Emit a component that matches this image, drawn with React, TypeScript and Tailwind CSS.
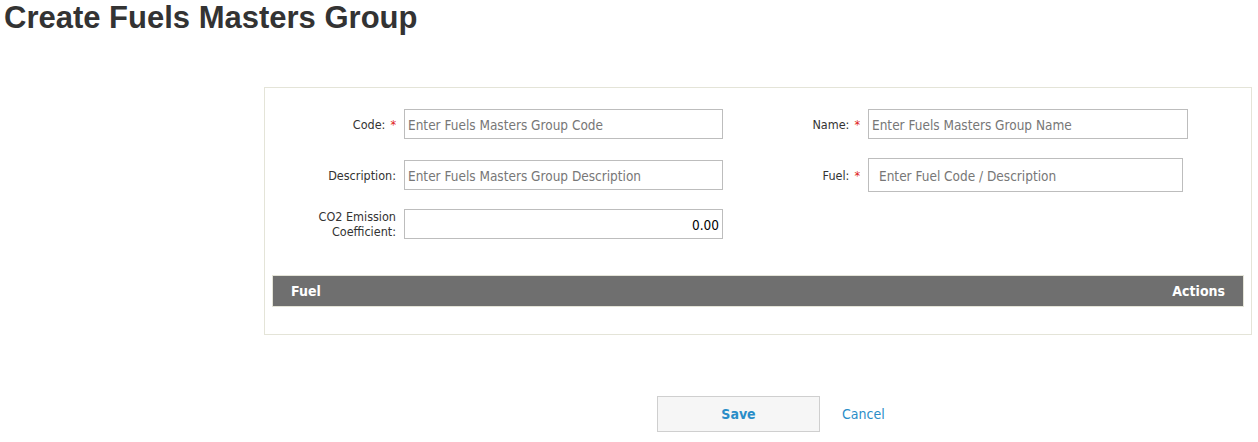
const FONT = "font-['DejaVu_Sans_Condensed','DejaVu_Sans',sans-serif]";

function Label({ text, required, className = "" }: { text: React.ReactNode; required?: boolean; className?: string }) {
  return (
    <div className={`flex items-center justify-end text-right text-[12.5px] leading-[15px] text-[#333] ${className}`}>
      <span>{text}</span>
      {required && <span className="ml-[5px] text-[#e02020]">*</span>}
    </div>
  );
}

function Field({ placeholder, value, className = "" }: { placeholder?: string; value?: string; className?: string }) {
  return (
    <input
      readOnly
      placeholder={placeholder}
      value={value ?? ""}
      className={`h-[30px] border border-[#bdbdbd] bg-white px-[3px] pt-[1px] text-[13.5px] text-black placeholder:text-[#777] outline-none ${className}`}
    />
  );
}

export default function App() {
  return (
    <div className={`bg-white min-h-[442px] ${FONT}`}>
      <h1 className="pl-[4px] pt-[1px] font-['Liberation_Sans',Arial,sans-serif] text-[31px] leading-[34px] font-bold text-[#333]">
        Create Fuels Masters Group
      </h1>

      <div className="ml-[264px] mt-[52px] w-[988px] border border-[#e4e4d8] pt-[21px] pb-[27px] px-[7px]">
        <div className="flex h-[30px] items-center gap-[8px]">
          <Label text="Code:" required className="w-[124px]" />
          <Field placeholder="Enter Fuels Masters Group Code" className="w-[319px]" />
          <Label text="Name:" required className="w-[129px]" />
          <Field placeholder="Enter Fuels Masters Group Name" className="w-[320px]" />
        </div>

        <div className="mt-[19px] flex h-[34px] items-center gap-[8px]">
          <Label text="Description:" className="w-[124px]" />
          <Field placeholder="Enter Fuels Masters Group Description" className="w-[319px]" />
          <Label text="Fuel:" required className="w-[129px]" />
          <Field placeholder="Enter Fuel Code / Description" className="h-[34px] w-[315px] pl-[10px]" />
        </div>

        <div className="mt-[17px] flex h-[30px] items-center gap-[8px]">
          <Label text={<>CO2 Emission<br />Coefficient:</>} className="w-[124px]" />
          <Field value="0.00" className="w-[319px] text-right" />
        </div>

        <div className="mt-[36px] flex h-[32px] items-center justify-between border border-[#e4e4d8] bg-[#6f6f6f] px-[18px] text-[14px] font-bold text-white">
          <span>Fuel</span>
          <span>Actions</span>
        </div>
      </div>

      <div className="mt-[61px] ml-[657px] flex items-center gap-[22px]">
        <button className="h-[36px] w-[163px] border border-[#cfcfcf] bg-[#f6f6f6] text-[14px] font-bold text-[#2a8dc8]">
          Save
        </button>
        <a className="text-[14px] text-[#2a8dc8]">Cancel</a>
      </div>
    </div>
  );
}
